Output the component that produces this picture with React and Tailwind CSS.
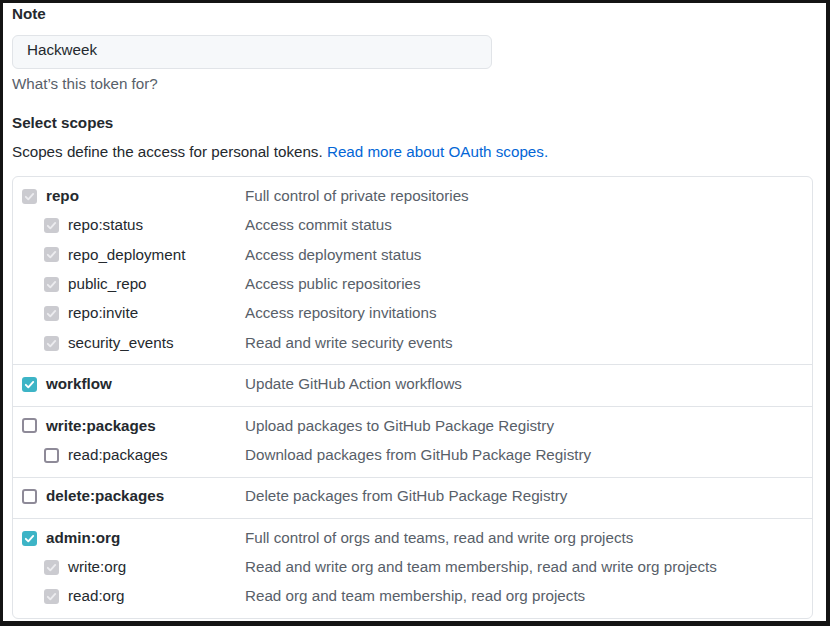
import React from "react";

const scopes = [
  [
    { name: "repo", desc: "Full control of private repositories", state: "disabled", top: true },
    { name: "repo:status", desc: "Access commit status", state: "disabled" },
    { name: "repo_deployment", desc: "Access deployment status", state: "disabled" },
    { name: "public_repo", desc: "Access public repositories", state: "disabled" },
    { name: "repo:invite", desc: "Access repository invitations", state: "disabled" },
    { name: "security_events", desc: "Read and write security events", state: "disabled" },
  ],
  [{ name: "workflow", desc: "Update GitHub Action workflows", state: "checked", top: true }],
  [
    { name: "write:packages", desc: "Upload packages to GitHub Package Registry", state: "unchecked", top: true },
    { name: "read:packages", desc: "Download packages from GitHub Package Registry", state: "unchecked" },
  ],
  [{ name: "delete:packages", desc: "Delete packages from GitHub Package Registry", state: "unchecked", top: true }],
  [
    { name: "admin:org", desc: "Full control of orgs and teams, read and write org projects", state: "checked", top: true },
    { name: "write:org", desc: "Read and write org and team membership, read and write org projects", state: "disabled" },
    { name: "read:org", desc: "Read org and team membership, read org projects", state: "disabled" },
  ],
];

function Check({ color }) {
  return (
    <svg width="15" height="15" viewBox="0 0 15 15" className="block">
      <path d="M3.8 7.8 L6.3 10.3 L11.2 4.9" fill="none" stroke={color} strokeWidth="1.9" strokeLinecap="round" strokeLinejoin="round" />
    </svg>
  );
}

function Box({ state }) {
  if (state === "checked")
    return (
      <span className="w-[15px] h-[15px] rounded-[3px] bg-[#3db4c6] shrink-0">
        <Check color="#ffffff" />
      </span>
    );
  if (state === "disabled")
    return (
      <span className="w-[15px] h-[15px] rounded-[3px] bg-[#cbcbd0] shrink-0">
        <Check color="#ececef" />
      </span>
    );
  return <span className="w-[15px] h-[15px] rounded-[3px] border-2 border-[#8e8a98] bg-white shrink-0" />;
}

export default function App() {
  return (
    <div className="w-[830px] h-[626px] bg-[#141414] pt-[3px] pl-[3px] pr-[4px] pb-[5px]" style={{ fontFamily: '"Liberation Sans", Arial, sans-serif' }}>
      <div className="w-full h-full bg-white overflow-hidden pl-[9px] pr-[13px] pt-[1px] text-[15.2px] text-[#24292e]">
        <div className="h-[20px] leading-[20px] font-bold">Note</div>
        <div className="mt-[11px] w-[480px] h-[34px] rounded-[6px] border border-[#e1e4e8] bg-[#f6f8fa] pl-[14px] pb-[3px] flex items-center">
          Hackweek
        </div>
        <div className="mt-[5px] h-[20px] leading-[20px] text-[#586069]">What’s this token for?</div>
        <div className="mt-[19px] h-[20px] leading-[20px] font-bold">Select scopes</div>
        <div className="mt-[9px] h-[20px] leading-[20px]">
          Scopes define the access for personal tokens.{" "}
          <span className="text-[#0366d6]">Read more about OAuth scopes.</span>
        </div>
        <div className="mt-[14px] border border-[#e1e4e8] rounded-[6px]">
          {scopes.map((group, gi) => (
            <div key={gi} className={`pt-[4.5px] pb-[6.5px] ${gi > 0 ? "border-t border-[#e1e4e8]" : ""}`}>
              {group.map((s) => (
                <div key={s.name} className="h-[29.4px] flex items-center pl-[9px]">
                  <div className={`w-[223px] flex items-center gap-[9px] ${s.top ? "" : "pl-[22px]"}`}>
                    <Box state={s.state} />
                    <span className={s.top ? "font-bold" : ""}>{s.name}</span>
                  </div>
                  <div className="text-[#586069] whitespace-nowrap">{s.desc}</div>
                </div>
              ))}
            </div>
          ))}
        </div>
      </div>
    </div>
  );
}
